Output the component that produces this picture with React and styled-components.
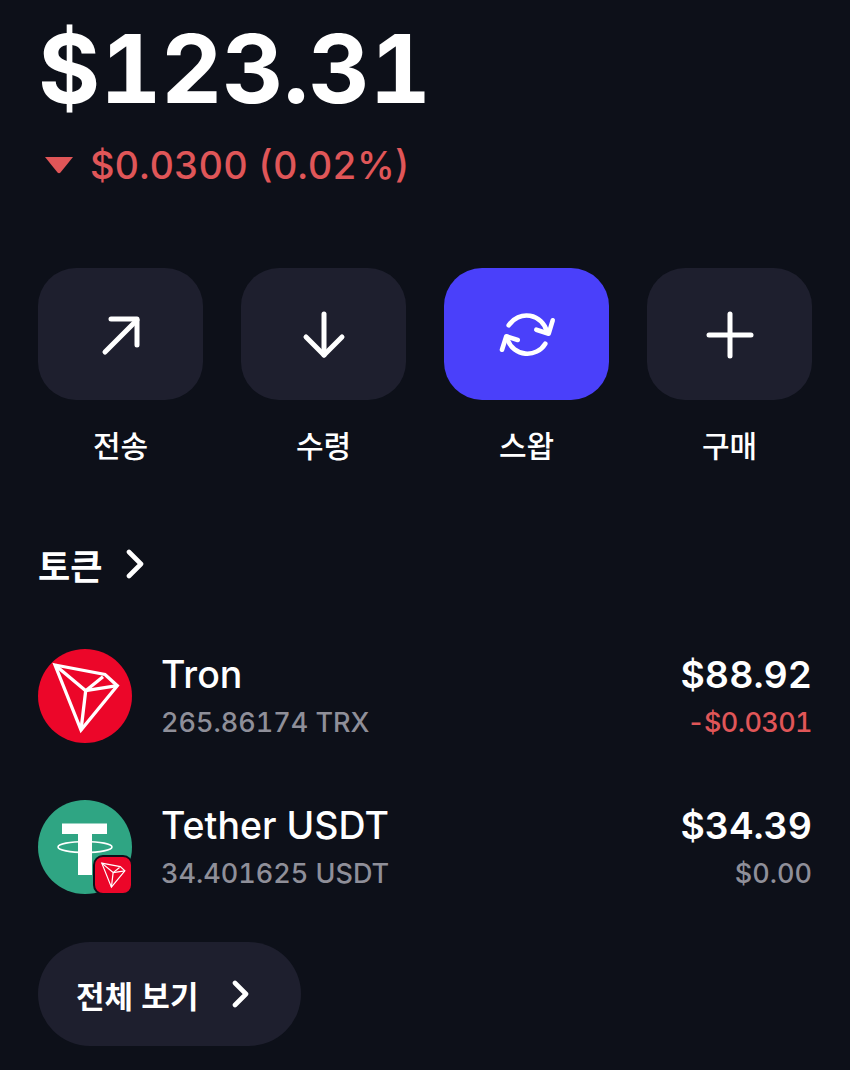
import React from 'react';
import styled, { createGlobalStyle } from 'styled-components';

const GlobalStyle = createGlobalStyle`
  html, body {
    margin: 0;
    padding: 0;
    background: #0d1019;
    overflow: hidden;
  }
`;

const FONT = `Inter, "Noto Sans CJK KR", sans-serif`;

const Page = styled.div`
  width: 850px;
  height: 1070px;
  box-sizing: border-box;
  padding: 0 38px;
  background: #0d1019;
  color: #fff;
  font-family: ${FONT};
  font-feature-settings: 'tnum' 1;
  display: flex;
  flex-direction: column;
  overflow: hidden;
`;

const Balance = styled.div`
  margin-top: 14px;
  height: 110px;
  line-height: 110px;
  font-size: 95px;
  letter-spacing: -0.3px;
  font-weight: 700;
`;

const Change = styled.div`
  margin-top: 18px;
  height: 46px;
  display: flex;
  align-items: center;
  gap: 16px;
  margin-left: 6px;
  color: #e05658;
  font-size: 38px;
  font-weight: 500;
`;

const Caret = styled.svg`
  width: 30px;
  height: 18px;
`;

const Actions = styled.div`
  margin-top: 80px;
  display: grid;
  grid-template-columns: repeat(4, 165px);
  gap: 38px;
`;

const Action = styled.div`
  display: flex;
  flex-direction: column;
  align-items: center;
  gap: 26px;
`;

const ActionButton = styled.div`
  width: 165px;
  height: 132px;
  box-sizing: border-box;
  padding-top: 2px;
  border-radius: 38px;
  display: flex;
  align-items: center;
  justify-content: center;
  background: ${(p) => (p.$primary ? '#4a40fa' : '#1e1f2e')};
`;

const ActionLabel = styled.div`
  font-size: 30px;
  line-height: 40px;
  font-weight: 500;
`;

const SectionTitle = styled.div`
  margin-top: 76px;
  height: 44px;
  display: flex;
  align-items: center;
  gap: 24px;
  font-size: 35px;
  font-weight: 600;
`;

const TokenList = styled.div`
  margin-top: 63px;
  display: flex;
  flex-direction: column;
  gap: 57px;
`;

const TokenRow = styled.div`
  height: 94px;
  display: flex;
  align-items: center;
  gap: 29px;
`;

const TokenIcon = styled.div`
  position: relative;
  width: 94px;
  height: 94px;
  flex-shrink: 0;
`;

const Badge = styled.svg`
  position: absolute;
  left: 55px;
  top: 55px;
  width: 40px;
  height: 40px;
`;

const TokenInfo = styled.div`
  flex: 1;
  display: flex;
  flex-direction: column;
  gap: 7px;
`;

const TokenValues = styled(TokenInfo)`
  flex: none;
  align-items: flex-end;
`;

const Primary = styled.div`
  font-size: 37.5px;
  line-height: 46px;
  font-weight: ${(p) => p.$weight || 550};
`;

const Secondary = styled.div`
  font-size: 27px;
  line-height: 36px;
  font-weight: 500;
  letter-spacing: ${(p) => (p.$down ? '-0.6px' : '0')};
  color: ${(p) => (p.$down ? '#e05658' : '#8f8f99')};
`;

const ViewAll = styled.div`
  margin-top: 48px;
  width: 263px;
  height: 104px;
  box-sizing: border-box;
  padding-left: 38px;
  border-radius: 52px;
  background: #1e1f2e;
  display: flex;
  align-items: center;
  gap: 34px;
  font-size: 31px;
  font-weight: 600;
`;

const StrokeIcon = styled.svg.attrs({
  fill: 'none',
  stroke: '#fff',
  strokeLinecap: 'round',
  strokeLinejoin: 'round',
})`
  display: block;
  flex-shrink: 0;
`;

const TronMark = () => (
  <g fill="none" stroke="#fff" strokeWidth="3.3" strokeLinejoin="miter">
    <path d="M17 16 L67 25.5 L79.3 36.7 L43 81 Z" />
    <path d="M17 16 L47.7 41.7 L43 81" />
    <path d="M47.7 41.7 L79.3 36.7" />
    <path d="M47.7 41.7 L65 27.7" />
  </g>
);

const TronIcon = () => (
  <svg width="94" height="94" viewBox="0 0 94 94">
    <circle cx="47" cy="47" r="47" fill="#ec0629" />
    <TronMark />
  </svg>
);

const TetherIcon = () => (
  <TokenIcon>
    <svg width="94" height="94" viewBox="0 0 94 94">
      <circle cx="47" cy="47" r="47" fill="#2fa583" />
      <path fill="#fff" d="M24 23.5 H69 V34 H54 V75 H40 V34 H24 Z" />
      <ellipse cx="47" cy="47" rx="27" ry="5.5" fill="none" stroke="#fff" strokeWidth="1.6" />
    </svg>
    <Badge viewBox="0 0 40 40">
      <rect x="1" y="1" width="38" height="38" rx="9" fill="#ec0629" stroke="#0d1019" strokeWidth="2" />
      <g transform="translate(2.5 2.2) scale(0.37)">
        <TronMark />
      </g>
    </Badge>
  </TokenIcon>
);

const SendIcon = () => (
  <StrokeIcon width="50" height="50" viewBox="0 0 50 50" strokeWidth="5">
    <path d="M9 42 L41 10" />
    <path d="M15 9 H41 V35" />
  </StrokeIcon>
);

const ReceiveIcon = () => (
  <StrokeIcon width="50" height="50" viewBox="0 0 50 50" strokeWidth="5">
    <path d="M25 4 V45" />
    <path d="M7 27 L25 45 L43 27" />
  </StrokeIcon>
);

const BuyIcon = () => (
  <StrokeIcon width="50" height="50" viewBox="0 0 50 50" strokeWidth="5">
    <path d="M25 4 V46" />
    <path d="M4 25 H46" />
  </StrokeIcon>
);

const SwapIcon = () => (
  <StrokeIcon width="60" height="60" viewBox="0 0 60 60" strokeWidth="4.6">
    <path d="M11.7 20.3 A21 21 0 0 1 50 27" />
    <path d="M55.7 15.3 L51.7 28.7 L39.3 24.7" />
    <path d="M48.3 38.7 A21 21 0 0 1 10.7 35" />
    <path d="M5 44.7 L9.3 31.3 L20.7 35" />
  </StrokeIcon>
);

const Chevron = ({ width, height }) => (
  <StrokeIcon width={width} height={height} viewBox={`0 0 ${width} ${height}`} strokeWidth="4.6">
    <path d={`M3 3 L${width - 3} ${height / 2} L3 ${height - 3}`} />
  </StrokeIcon>
);

const actions = [
  { label: '전송', icon: <SendIcon /> },
  { label: '수령', icon: <ReceiveIcon /> },
  { label: '스왑', icon: <SwapIcon />, primary: true },
  { label: '구매', icon: <BuyIcon /> },
];

const App = () => (
  <Page>
    <GlobalStyle />
    <Balance>$123.31</Balance>
    <Change>
      <Caret viewBox="0 0 30 18">
        <path d="M1 1 H29 L16.5 16.5 Q15 18 13.5 16.5 Z" fill="#e05658" />
      </Caret>
      $0.0300 (0.02%)
    </Change>

    <Actions>
      {actions.map((a) => (
        <Action key={a.label}>
          <ActionButton $primary={a.primary}>{a.icon}</ActionButton>
          <ActionLabel>{a.label}</ActionLabel>
        </Action>
      ))}
    </Actions>

    <SectionTitle>
      토큰
      <Chevron width={18} height={30} />
    </SectionTitle>

    <TokenList>
      <TokenRow>
        <TokenIcon>
          <TronIcon />
        </TokenIcon>
        <TokenInfo>
          <Primary>Tron</Primary>
          <Secondary>265.86174 TRX</Secondary>
        </TokenInfo>
        <TokenValues>
          <Primary $weight={600}>$88.92</Primary>
          <Secondary $down>-$0.0301</Secondary>
        </TokenValues>
      </TokenRow>
      <TokenRow>
        <TetherIcon />
        <TokenInfo>
          <Primary>Tether USDT</Primary>
          <Secondary>34.401625 USDT</Secondary>
        </TokenInfo>
        <TokenValues>
          <Primary $weight={600}>$34.39</Primary>
          <Secondary>$0.00</Secondary>
        </TokenValues>
      </TokenRow>
    </TokenList>

    <ViewAll>
      전체 보기
      <Chevron width={17} height={28} />
    </ViewAll>
  </Page>
);

export default App;
